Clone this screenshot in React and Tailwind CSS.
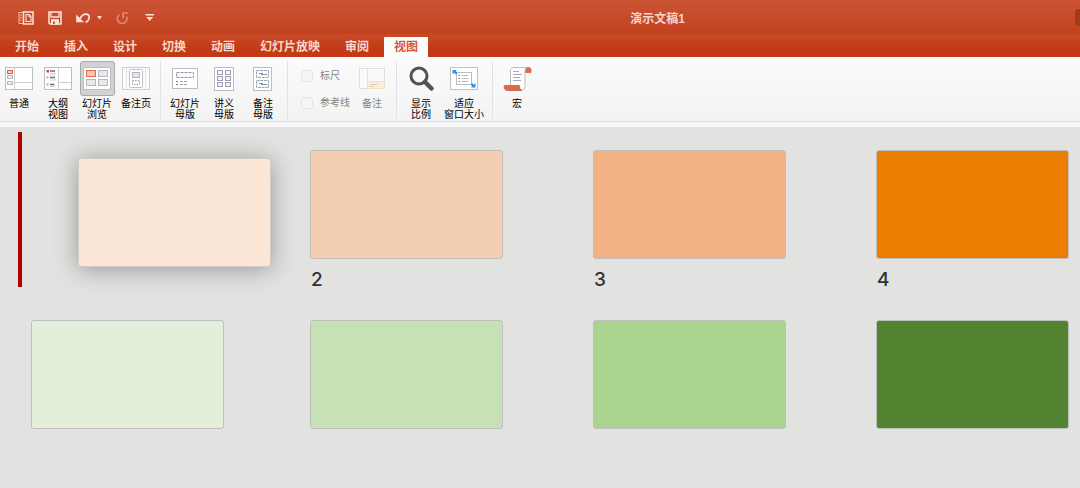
import { useState } from "react";

const TABS = ["开始", "插入", "设计", "切换", "动画", "幻灯片放映", "审阅", "视图"];

const SLIDES = [
  { id: 1, color: "bg-[#fbe6d8]", dragging: true },
  { id: 2, color: "bg-[#f3ceb3]", label: "2" },
  { id: 3, color: "bg-[#f3b183]", label: "3" },
  { id: 4, color: "bg-[#eb7d00]", label: "4" },
  { id: 5, color: "bg-[#e3efda]" },
  { id: 6, color: "bg-[#c7e1b6]" },
  { id: 7, color: "bg-[#aad38f]" },
  { id: 8, color: "bg-[#528331]" },
];

function PanesIcon() {
  return (
    <svg width="16" height="14" viewBox="0 0 16 14" fill="none" stroke="currentColor">
      <path d="M5.500 1H15v12H5.500z" strokeWidth="1.500" />
      <path d="M5 1.500H1v11h4" strokeWidth="1" opacity="0.750" />
      <path d="M2 4h2M2 6.500h2M2 9h2" strokeWidth="1" opacity="0.750" />
      <path d="M8 3.500h3l2 2V10.500H8z" strokeWidth="1.100" />
      <path d="M10.800 3.500v2.300h2.200" strokeWidth="1" />
    </svg>
  );
}

function SaveIcon() {
  return (
    <svg width="14" height="14" viewBox="0 0 14 14" fill="none" stroke="currentColor" strokeWidth="1.600">
      <path d="M1 1h12v12H2l-1-1z" />
      <path d="M3 1v5h8V1" strokeWidth="1.300" />
      <path d="M3.500 13V8.700h7V13z" fill="currentColor" strokeWidth="1" />
      <path d="M5 10.500h1.800V13H5z" fill="#c64a28" stroke="none" />
    </svg>
  );
}

function UndoIcon() {
  return (
    <svg width="14" height="14" viewBox="0 0 14 14" fill="none">
      <path d="M0.200 3.500v7.800h7.800z" fill="currentColor" />
      <path d="M3.500 8C5.500 5 7.500 3.200 9.800 3.200c2 0 3.400 1.400 3.400 3.300 0 2.300-1.600 3.900-3.600 5" stroke="currentColor" strokeWidth="1.700" />
    </svg>
  );
}

function RedoIcon() {
  return (
    <svg width="13" height="14" viewBox="0 0 13 14" fill="none" stroke="currentColor" strokeWidth="1.700">
      <path d="M3.200 3.800A4.800 4.800 0 1 0 10.500 5.500" />
      <path d="M7.200 7V2h5" />
    </svg>
  );
}

function CustomizeIcon() {
  return (
    <svg width="14" height="14" viewBox="0 0 14 14" fill="currentColor">
      <path d="M2.500 3h8.500v1.400H2.500zM3.200 6h7L6.700 10z" />
    </svg>
  );
}

function NormalIcon() {
  return (
    <svg width="28" height="24" viewBox="0 0 28 24" fill="none">
      <rect x="0.500" y="0.500" width="27" height="22" fill="#fff" stroke="#bebebe" />
      <path d="M9.500 1v21M10 15.500h17" stroke="#cfcfcf" />
      <rect x="2.500" y="3.500" width="5" height="3" fill="#f8cdbf" stroke="#dd6045" />
      <rect x="2.500" y="8.500" width="5" height="3" fill="#eceef3" stroke="#b4b8c4" />
      <rect x="2.500" y="14.500" width="5" height="3" fill="#eceef3" stroke="#b4b8c4" />
    </svg>
  );
}

function OutlineIcon() {
  return (
    <svg width="28" height="24" viewBox="0 0 28 24" fill="none">
      <rect x="0.500" y="0.500" width="27" height="22" fill="#fff" stroke="#bebebe" />
      <path d="M14.500 1v21M15 15.500h12" stroke="#cfcfcf" />
      <path d="M2.500 3h2.500v2.500H2.500z" fill="#d8452c" />
      <path d="M2.500 9.500h2v2h-2zM2.500 16.500h2v2h-2z" fill="#a3a9b8" />
      <path d="M6 4h5M6 10.500h5M6 17.500h4.500" stroke="#6d6d74" strokeWidth="1.300" />
      <path d="M6 6.500h6M6 8h5M6 13h6M6 19.500h5" stroke="#cfd2da" />
    </svg>
  );
}

function SorterIcon() {
  return (
    <svg width="28" height="24" viewBox="0 0 28 24" fill="none">
      <rect x="0.500" y="0.500" width="27" height="22" fill="#fff" stroke="#bcbcbc" />
      <rect x="3.500" y="3.500" width="9" height="6" fill="#f8c3b2" stroke="#dc6a50" />
      <rect x="15.500" y="3.500" width="9" height="6" fill="#e6e8ee" stroke="#b3b8c5" />
      <rect x="3.500" y="12.500" width="9" height="6" fill="#e6e8ee" stroke="#b3b8c5" />
      <rect x="15.500" y="12.500" width="9" height="6" fill="#e6e8ee" stroke="#b3b8c5" />
    </svg>
  );
}

function NotesPageIcon() {
  return (
    <svg width="28" height="24" viewBox="0 0 28 24" fill="none">
      <rect x="0.500" y="0.500" width="27" height="22" fill="#fbfbfb" stroke="#cfcfcf" />
      <path d="M4.500 1v21M23.500 1v21" stroke="#e6e6e6" />
      <rect x="7.500" y="2.500" width="13" height="18" rx="1" fill="#fff" stroke="#c2c2c2" />
      <rect x="10.500" y="5.500" width="7" height="5" fill="#e3e6ed" stroke="#b0b6c4" />
      <rect x="10.500" y="13.500" width="7" height="4" fill="#fff" stroke="#98a0b3" strokeDasharray="1.500 1" />
    </svg>
  );
}

function SlideMasterIcon() {
  return (
    <svg width="28" height="24" viewBox="0 0 28 24" fill="none">
      <rect x="1.500" y="1.500" width="25" height="20" fill="#fff" stroke="#bdbdbd" />
      <rect x="5.500" y="5.500" width="17" height="5" fill="#f7f8fa" stroke="#8f97ab" strokeDasharray="3 1" />
      <path d="M5 14.500h2M5 17.500h2" stroke="#6f7890" />
      <path d="M9 14.500h7M9 17.500h7" stroke="#9aa1b2" strokeDasharray="3 1" />
    </svg>
  );
}

function HandoutMasterIcon() {
  return (
    <svg width="28" height="26" viewBox="0 0 28 26" fill="none">
      <rect x="4.500" y="1.500" width="19" height="23" fill="#fff" stroke="#bdbdbd" />
      <g fill="#f4f5f8" stroke="#9ba2b4">
        <rect x="7.500" y="4.500" width="5" height="4" />
        <rect x="15.500" y="4.500" width="5" height="4" />
        <rect x="7.500" y="10.500" width="5" height="4" />
        <rect x="15.500" y="10.500" width="5" height="4" />
        <rect x="7.500" y="16.500" width="5" height="4" />
        <rect x="15.500" y="16.500" width="5" height="4" />
      </g>
    </svg>
  );
}

function NotesMasterIcon() {
  return (
    <svg width="28" height="26" viewBox="0 0 28 26" fill="none">
      <rect x="4.500" y="1.500" width="18" height="23" fill="#fff" stroke="#bdbdbd" />
      <g fill="#f8f9fb" stroke="#9ba2b4" strokeDasharray="3 0.800">
        <rect x="7.500" y="4.500" width="12" height="7" />
        <rect x="7.500" y="14.500" width="12" height="7" />
      </g>
      <path d="M10 7.500h4M12 8.500h6M10 17.500h4M12 18.500h6" stroke="#8a92a6" />
    </svg>
  );
}

function NotesPaneIcon() {
  return (
    <svg width="28" height="24" viewBox="0 0 28 24" fill="none">
      <rect x="1.500" y="1.500" width="25" height="20" fill="#fafafa" stroke="#e0dddc" />
      <path d="M9.500 2v19" stroke="#e4e4e4" />
      <path d="M9.500 14.500h17v7h-17z" fill="#fcf0dc" stroke="#eedfc6" />
      <path d="M12 17.500h7M11 19.500h5" stroke="#dfc8aa" />
    </svg>
  );
}

function ZoomIcon() {
  return (
    <svg width="28" height="28" viewBox="0 0 28 28" fill="none" stroke="#535353">
      <circle cx="12" cy="11" r="8" strokeWidth="3" />
      <path d="M18 17l6.500 6.500" strokeWidth="4.500" strokeLinecap="round" />
    </svg>
  );
}

function FitWindowIcon() {
  return (
    <svg width="28" height="24" viewBox="0 0 28 24" fill="none">
      <rect x="0.500" y="0.500" width="27" height="22" fill="#fff" stroke="#c2c2c2" />
      <rect x="6.500" y="5.500" width="15" height="12" fill="#fff" stroke="#bcbcbc" />
      <path d="M8.500 8.500h1.500M8.500 11.500h1.500M8.500 14.500h1.500" stroke="#6f7890" />
      <path d="M11.500 8.500h7M11.500 11.500h7M11.500 14.500h7" stroke="#b4bac7" />
      <path d="M2.500 3h4.500L5.700 4.300 7.500 6.100 6 7.600 4.100 5.800 2.500 7.400zM25.500 20.500h-4.500l1.300-1.300-1.800-1.800 1.500-1.500 1.900 1.800 1.600-1.600z" fill="#2e8cf0" />
    </svg>
  );
}

function MacroIcon() {
  return (
    <svg width="32" height="26" viewBox="0 0 32 26" fill="none">
      <path d="M24 1.500h3.500c1.800 0 2.500 1.300 2.500 2.600V6.500h-6z" fill="#e0674a" stroke="#c5583d" strokeWidth="0.700" />
      <path d="M12 1.500h14c-1.600.8-2 2-2 4v14.500c0 2.500-1 4-3 4.500H9.500V5c0-2 .8-3 2.500-3.500z" fill="#fff" stroke="#bcbcbc" />
      <path d="M12 5.500h6M12 8.500h9M12 11.500h7M12 14.500h8" stroke="#a4abbb" />
      <path d="M3 19.500h15.500c0 2.500.8 4.200 2.500 5H6.500c-2.200 0-3.500-1.600-3.500-5z" fill="#e0674a" stroke="#c5583d" strokeWidth="0.700" />
    </svg>
  );
}

function RibbonButton({ icon, lines, selected = false, disabled = false, width = "w-[38px]" }) {
  return (
    <button
      type="button"
      disabled={disabled}
      aria-pressed={selected}
      className={`flex ${width} flex-col items-center text-[10px] leading-[11px] whitespace-nowrap ${disabled ? "text-[#858585]" : "text-black"}`}
    >
      <span
        className={`mb-0.5 flex h-[35px] w-[35px] items-center justify-center rounded-[3px] border ${selected ? "border-[#a9a9a9] bg-[#d2d2d2]" : "border-transparent"}`}
      >
        <span className="shrink-0">{icon}</span>
      </span>
      {lines.map((line) => (
        <span key={line}>{line}</span>
      ))}
    </button>
  );
}

function RibbonCheckbox({ label }) {
  return (
    <label className="flex h-[13px] items-center gap-[7px] text-[10px] text-[#858585]">
      <input type="checkbox" disabled className="h-3 w-3 appearance-none rounded-[3px] border border-[#e4e4e4] bg-[#f5f5f5]" />
      {label}
    </label>
  );
}

function Separator() {
  return <div className="mx-[5px] h-[58px] w-px bg-[#e2e2e2]" />;
}

function TitleBar() {
  return (
    <div className="flex h-[34px] items-center bg-linear-to-b from-[#ca5435] to-[#c4411d] text-[#fbe3da]">
      <div className="flex w-60 items-center gap-[14px] pt-0.5 pl-[18px]">
        <button type="button" aria-label="切换窗格"><PanesIcon /></button>
        <button type="button" aria-label="保存"><SaveIcon /></button>
        <button type="button" aria-label="撤消" className="flex items-center gap-[7px]">
          <UndoIcon />
          <svg width="5" height="4" viewBox="0 0 5 4" fill="currentColor">
            <path d="M0 0h5L2.500 3.500z" />
          </svg>
        </button>
        <button type="button" aria-label="恢复" disabled className="text-[#dd8b73]"><RedoIcon /></button>
        <button type="button" aria-label="自定义工具栏"><CustomizeIcon /></button>
      </div>
      <h1 className="flex-1 pt-1 text-center text-xs font-bold text-[#f6d5ca]">演示文稿1</h1>
      <div className="h-[17px] w-[5px] rounded-l-[3px] bg-[#a23a1e]" />
    </div>
  );
}

function TabBar({ activeTab, onSelect }) {
  return (
    <div role="tablist" className="flex h-[23px] items-end gap-[5px] bg-linear-to-b from-[#c74b29] to-[#c33b16] to-60% pl-[5px]">
      {TABS.map((tab) => (
        <button
          key={tab}
          type="button"
          role="tab"
          aria-selected={tab === activeTab}
          onClick={() => onSelect(tab)}
          className={`h-5 rounded-t-[1px] px-[10px] text-xs font-bold ${tab === activeTab ? "bg-[#fcfcfc] text-[#d4583a]" : "text-[#f8d8cd]"}`}
        >
          {tab}
        </button>
      ))}
    </div>
  );
}

function Ribbon() {
  return (
    <div className="flex h-[65px] items-start border-b border-[#dadada] bg-linear-to-b from-[#fbfbfb] to-[#f3f3f3] pt-1">
      <div className="flex gap-px">
        <RibbonButton icon={<NormalIcon />} lines={["普通"]} />
        <RibbonButton icon={<OutlineIcon />} lines={["大纲", "视图"]} />
        <RibbonButton icon={<SorterIcon />} lines={["幻灯片", "浏览"]} selected />
        <RibbonButton icon={<NotesPageIcon />} lines={["备注页"]} />
      </div>
      <Separator />
      <div className="flex gap-px">
        <RibbonButton icon={<SlideMasterIcon />} lines={["幻灯片", "母版"]} />
        <RibbonButton icon={<HandoutMasterIcon />} lines={["讲义", "母版"]} />
        <RibbonButton icon={<NotesMasterIcon />} lines={["备注", "母版"]} />
      </div>
      <Separator />
      <div className="flex gap-[3px] pl-2">
        <div className="flex flex-col gap-[14px] pt-2">
          <RibbonCheckbox label="标尺" />
          <RibbonCheckbox label="参考线" />
        </div>
        <RibbonButton icon={<NotesPaneIcon />} lines={["备注"]} disabled />
      </div>
      <Separator />
      <div className="flex gap-px">
        <RibbonButton icon={<ZoomIcon />} lines={["显示", "比例"]} />
        <RibbonButton icon={<FitWindowIcon />} lines={["适应", "窗口大小"]} width="w-[46px]" />
      </div>
      <Separator />
      <RibbonButton icon={<MacroIcon />} lines={["宏"]} />
    </div>
  );
}

function Slide({ slide }) {
  if (slide.dragging) {
    return (
      <li className="relative">
        {/* drop position, left of the slot the slide was picked up from */}
        <div className="absolute -top-[18px] -left-[13px] h-[155px] w-1 bg-[#ad0000]" />
        <div className={`absolute top-2 left-[47px] h-[109px] w-[193px] rounded-[3px] border border-[#d3cbc5] shadow-[0_2px_24px_rgba(0,0,0,0.34)] ${slide.color}`} />
      </li>
    );
  }

  return (
    <li>
      <div className={`h-[109px] w-[193px] rounded-[3px] border border-[#bfbfbd] ${slide.color}`} />
      {slide.label ? (
        <p className="mt-[11px] pl-px font-[Inter,sans-serif] text-[19px] leading-5 font-medium text-[#2f3133]">{slide.label}</p>
      ) : null}
    </li>
  );
}

export default function App() {
  const [activeTab, setActiveTab] = useState("视图");

  return (
    <div className="flex min-h-screen flex-col bg-[#e2e2e0] font-['Liberation_Sans','Noto_Sans_CJK_SC',sans-serif]">
      <header>
        <TitleBar />
        <TabBar activeTab={activeTab} onSelect={setActiveTab} />
        <Ribbon />
        <div className="h-[5px] bg-[#f6f6f6]" />
      </header>
      <main className="flex-1 overflow-hidden pt-[23px] pl-[31px]">
        <ol className="grid grid-cols-[279fr_283fr_283fr_204fr] auto-rows-[170px]">
          {SLIDES.map((slide) => (
            <Slide key={slide.id} slide={slide} />
          ))}
        </ol>
      </main>
    </div>
  );
}
